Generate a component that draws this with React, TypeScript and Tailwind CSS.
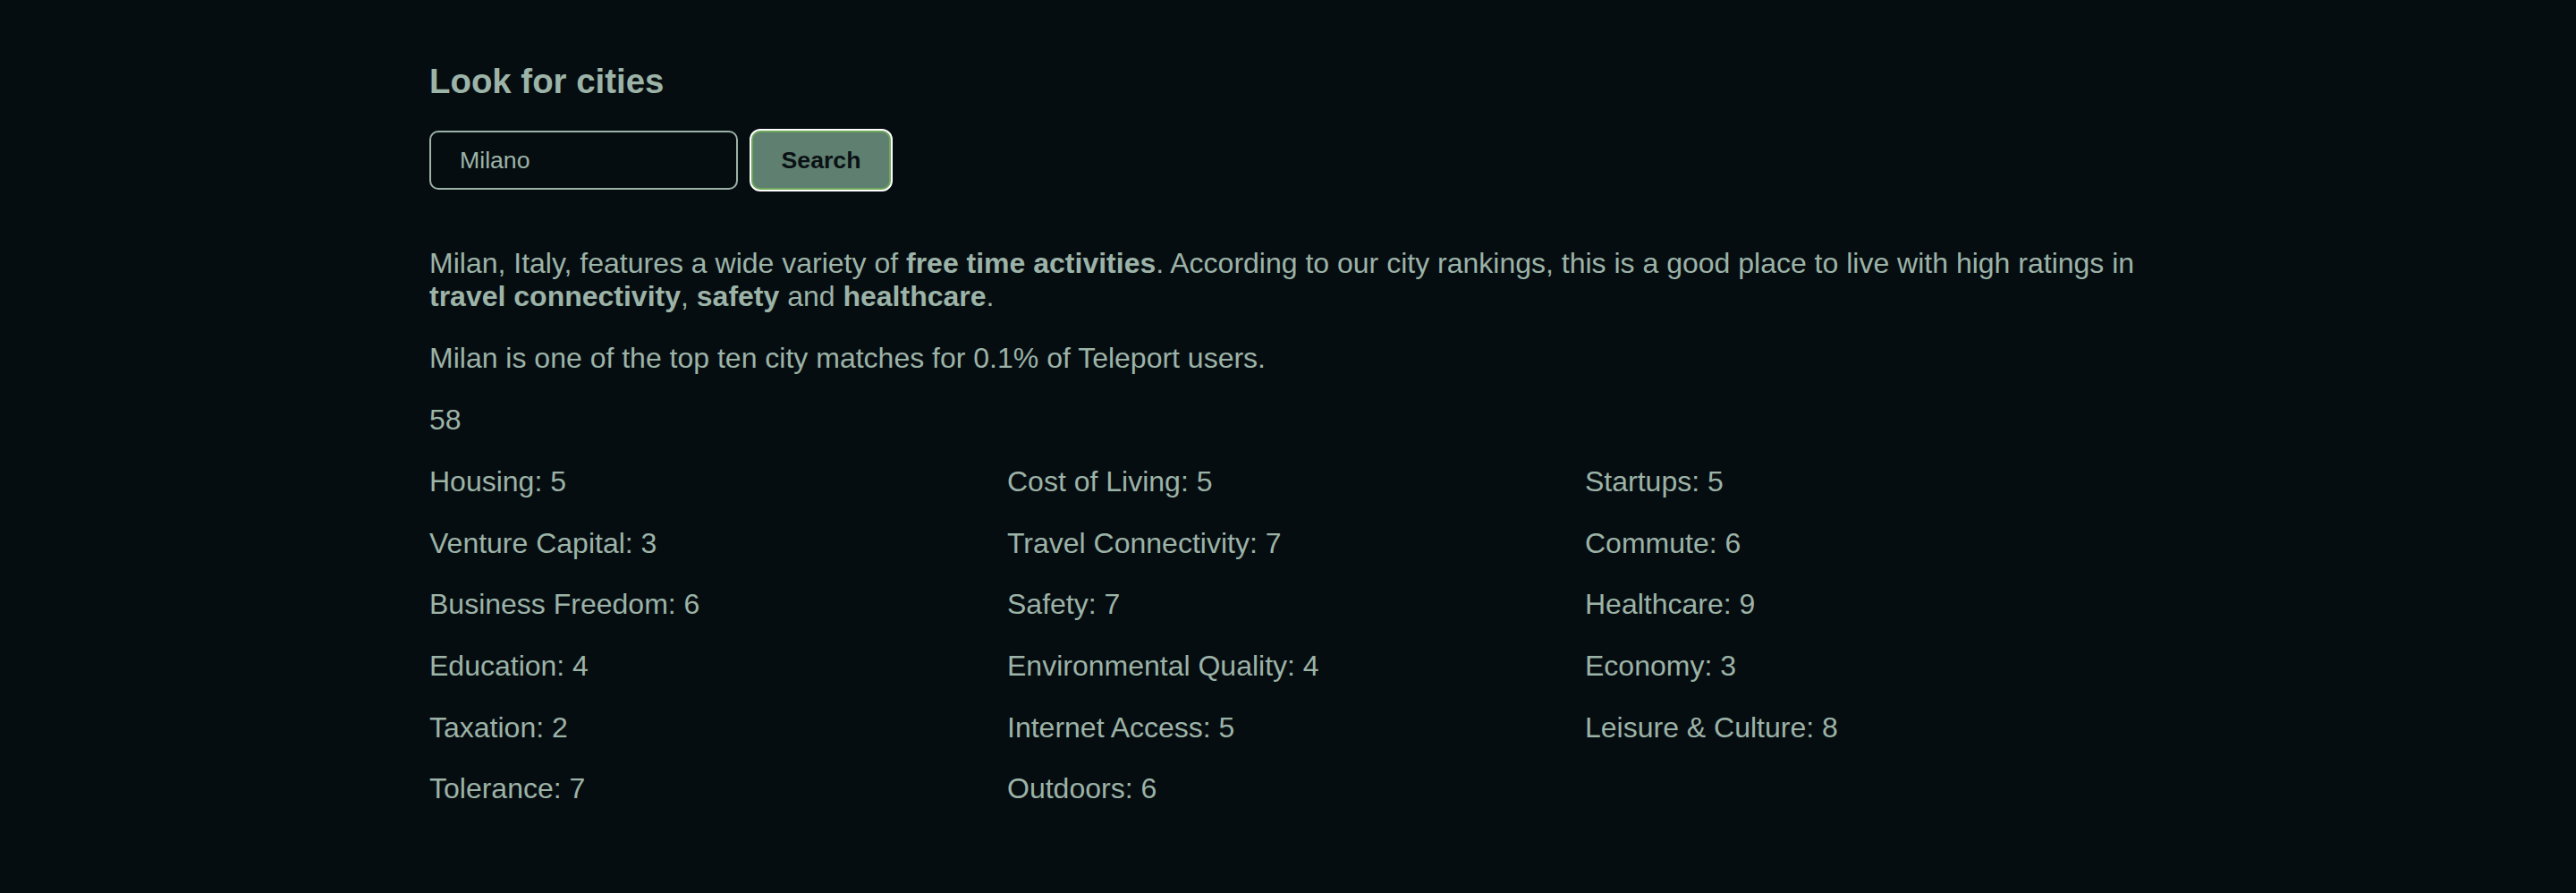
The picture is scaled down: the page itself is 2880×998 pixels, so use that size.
import { useState } from "react";

const SCORES = [
  { label: "Housing", value: 5 },
  { label: "Cost of Living", value: 5 },
  { label: "Startups", value: 5 },
  { label: "Venture Capital", value: 3 },
  { label: "Travel Connectivity", value: 7 },
  { label: "Commute", value: 6 },
  { label: "Business Freedom", value: 6 },
  { label: "Safety", value: 7 },
  { label: "Healthcare", value: 9 },
  { label: "Education", value: 4 },
  { label: "Environmental Quality", value: 4 },
  { label: "Economy", value: 3 },
  { label: "Taxation", value: 2 },
  { label: "Internet Access", value: 5 },
  { label: "Leisure & Culture", value: 8 },
  { label: "Tolerance", value: 7 },
  { label: "Outdoors", value: 6 },
];

export default function App() {
  const [query, setQuery] = useState("Milano");

  return (
    <div
      className="min-h-screen bg-[#060d11] text-[#9cb3a7]"
      style={{ fontFamily: '"Liberation Sans", Arial, sans-serif' }}
    >
      <div className="mx-auto w-[1920px] pt-[70px] pb-[60px]">
        <h2 className="text-[38.4px] font-bold leading-[42px]">Look for cities</h2>

        <form
          className="mt-[32px] flex items-center gap-[13px]"
          onSubmit={(e) => e.preventDefault()}
        >
          <input
            value={query}
            onChange={(e) => setQuery(e.target.value)}
            className="h-[66px] w-[345px] rounded-[10px] border-2 border-[#9cb3a7] bg-[#060d11] pl-[32px] text-[26.67px] text-[#9cb3a7] outline-none"
          />
          <button
            type="submit"
            className="h-[70px] w-[160px] rounded-[12px] border-2 border-white bg-[#5f7f70] text-[26.67px] font-bold text-[#0a1114] shadow-[inset_0_0_0_2px_#6ea85a]"
          >
            Search
          </button>
        </form>

        <div className="mt-[62px] text-[32px] leading-[37px]">
          <p>
            Milan, Italy, features a wide variety of <b>free time activities</b>.
            According to our city rankings, this is a good place to live with
            high ratings in <b>travel connectivity</b>, <b>safety</b> and{" "}
            <b>healthcare</b>.
          </p>
          <p className="mt-[32px]">
            Milan is one of the top ten city matches for 0.1% of Teleport users.
          </p>
          <p className="mt-[32px]">58</p>

          <div className="mt-[32px] grid grid-cols-3 gap-x-[18px] gap-y-[31.7px]">
            {SCORES.map((s) => (
              <div key={s.label}>
                {s.label}: {s.value}
              </div>
            ))}
          </div>
        </div>
      </div>
    </div>
  );
}
